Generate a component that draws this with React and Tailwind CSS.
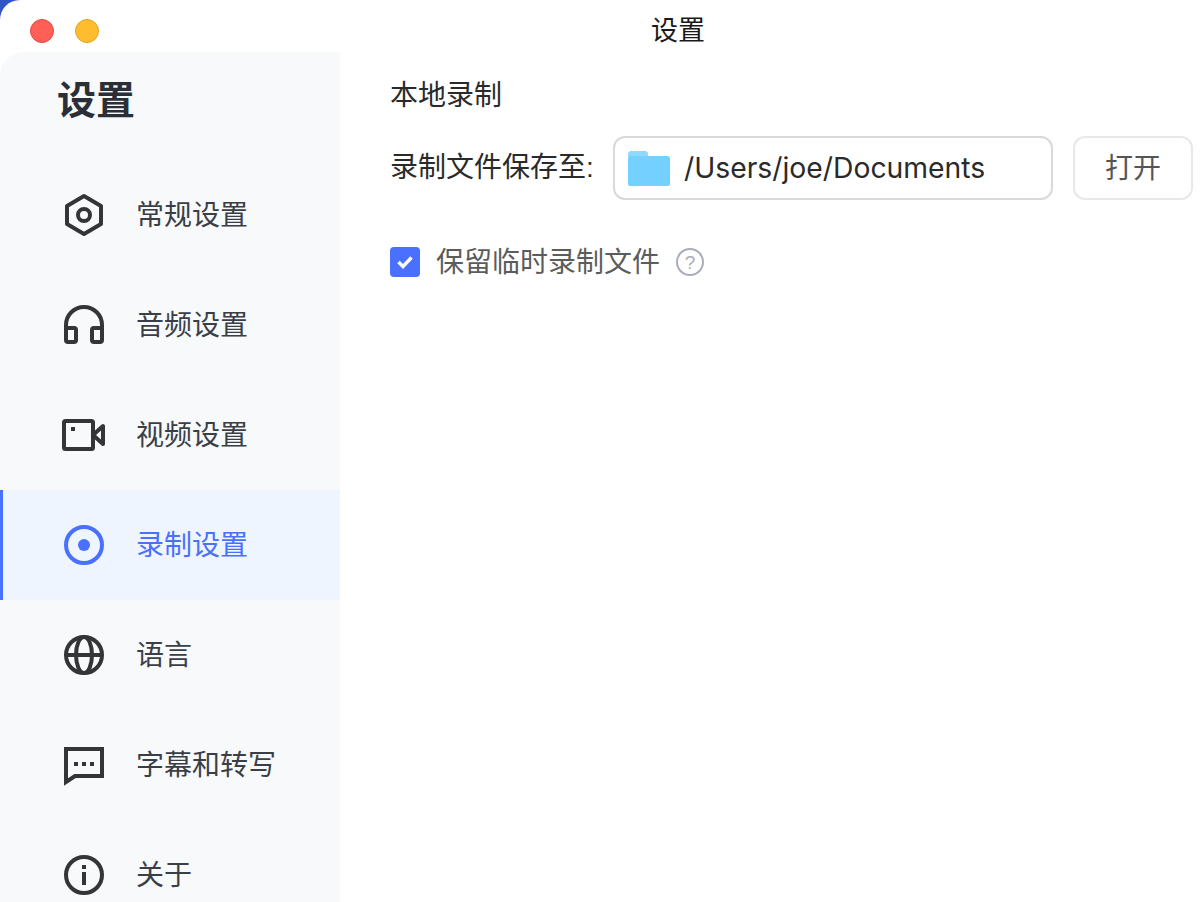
const NavIcon = ({ children, className = 'text-[#333537]' }) => (
  <svg width="44" height="44" viewBox="0 0 44 44" fill="none" stroke="currentColor" strokeWidth="4" className={`shrink-0 ${className}`}>
    {children}
  </svg>
);

const navItems = [
  {
    label: '常规设置',
    icon: (
      <>
        <path d="M22 3l17 10v18L22 41 5 31V13z" strokeLinejoin="round" />
        <circle cx="22" cy="22" r="6" />
      </>
    ),
  },
  {
    label: '音频设置',
    icon: (
      <>
        <path d="M4 27v-5a18 18 0 0 1 36 0v5" />
        <rect x="4" y="25" width="10" height="14" rx="2" />
        <rect x="30" y="25" width="10" height="14" rx="2" />
      </>
    ),
  },
  {
    label: '视频设置',
    icon: (
      <>
        <rect x="2" y="8" width="29" height="28" rx="1.5" strokeLinejoin="round" />
        <path d="M31 22l10-9v18z" strokeLinejoin="round" />
        <rect x="9" y="14" width="4" height="4" fill="currentColor" stroke="none" />
      </>
    ),
  },
  {
    label: '录制设置',
    active: true,
    icon: (
      <>
        <circle cx="22" cy="22" r="18" />
        <circle cx="22" cy="22" r="6" fill="currentColor" stroke="none" />
      </>
    ),
  },
  {
    label: '语言',
    icon: (
      <>
        <circle cx="22" cy="22" r="18" />
        <ellipse cx="22" cy="22" rx="8" ry="18" />
        <path d="M4 22h36" />
      </>
    ),
  },
  {
    label: '字幕和转写',
    icon: (
      <>
        <path d="M4 6h36v27H13l-9 6z" strokeLinejoin="miter" />
        <rect x="12" y="19" width="4" height="4" fill="currentColor" stroke="none" />
        <rect x="20" y="19" width="4" height="4" fill="currentColor" stroke="none" />
        <rect x="28" y="19" width="4" height="4" fill="currentColor" stroke="none" />
      </>
    ),
  },
  {
    label: '关于',
    icon: (
      <>
        <circle cx="22" cy="22" r="18" />
        <rect x="20" y="19" width="4" height="13" fill="currentColor" stroke="none" />
        <rect x="20" y="12" width="4" height="4" fill="currentColor" stroke="none" />
      </>
    ),
  },
];

const App = () => {
  return (
    <div className="h-[902px] overflow-hidden bg-[#2f55c9] font-['Liberation_Sans','Noto_Sans_CJK_SC',sans-serif]">
      <div className="h-full overflow-hidden rounded-tl-[20px] bg-white">
        {/* Title bar */}
        <div className="flex h-[52px] items-center pt-[8px]">
          <div className="flex w-[651px] items-center gap-[21px] pl-[30px] pt-[2px]">
            <span className="h-6 w-6 rounded-full border border-[#e5483f] bg-[#ff5f57]" />
            <span className="h-6 w-6 rounded-full border border-[#e0a528] bg-[#febc2e]" />
          </div>
          <span className="pt-[2px] text-[27px] leading-none text-[#1a1a1a]">设置</span>
        </div>

        <div className="flex">
          {/* Sidebar */}
          <div className="h-[850px] w-[340px] shrink-0 overflow-hidden rounded-tl-[24px] bg-[#f7f9fb]">
            <h1 className="flex h-[108px] items-center pb-[12px] pl-[57px] text-[39px] font-bold leading-none text-[#2b3038]">设置</h1>
            {navItems.map((item) => (
              <div
                key={item.label}
                className={`flex h-[110px] shrink-0 items-center gap-[30px] ${
                  item.active ? 'border-l-[3px] border-[#4a70ff] bg-[#eef5ff] pl-[59px]' : 'pl-[62px]'
                }`}
              >
                <NavIcon className={item.active ? 'text-[#4a70ff]' : 'text-[#333537]'}>{item.icon}</NavIcon>
                <span className={`pt-[2px] text-[28px] leading-none ${item.active ? 'text-[#4a70ff]' : 'text-[#3a3f47]'}`}>{item.label}</span>
              </div>
            ))}
          </div>

          {/* Main */}
          <div className="min-w-0 flex-1 pl-[50px] pt-[29px]">
            <h2 className="pt-[1px] text-[28px] font-normal leading-[27px] text-[#2a2a2a]">本地录制</h2>
            <div className="mt-[27px] flex items-center">
              <span className="w-[223px] text-[28px] leading-none text-[#2a2a2a]">录制文件保存至:</span>
              <div className="flex h-16 w-[440px] items-center rounded-[12px] border-2 border-[#d9d9d9] pl-[13px]">
                <svg width="42" height="36" viewBox="0 0 42 36" className="mt-[1px] shrink-0">
                  <path d="M0 3a3 3 0 0 1 3-3h14a3 3 0 0 1 3 3v3h-20z" fill="#8fd9ff" />
                  <path d="M0 8a3 3 0 0 1 3-3h36a3 3 0 0 1 3 3v25a2 2 0 0 1-2 2H2a2 2 0 0 1-2-2z" fill="#74d0ff" />
                </svg>
                <span className="ml-[14px] pt-[1px] font-['Inter',sans-serif] text-[28.3px] leading-none text-[#2a2a2a]">/Users/joe/Documents</span>
              </div>
              <button className="ml-5 h-16 w-[120px] rounded-[12px] border-2 border-[#e8e8e8] pt-[1px] text-[28px] leading-none text-[#555555]">打开</button>
            </div>
            <div className="mt-[47px] flex items-center">
              <span className="flex h-[30px] w-[30px] items-center justify-center rounded-[4px] bg-[#4a70ff]">
                <svg width="16" height="14" viewBox="0 0 16 14" fill="none" stroke="white" strokeWidth="3.4">
                  <path d="M1.5 7l4.5 4.5L14.5 2.5" />
                </svg>
              </span>
              <span className="ml-[16px] pt-[2px] text-[28px] leading-none text-[#5c5c5c]">保留临时录制文件</span>
              <span className="ml-[16px] flex h-[28px] w-[28px] items-center justify-center rounded-full border-2 border-[#a9adb8] text-[19px] leading-none text-[#a9adb8]">?</span>
            </div>
          </div>
        </div>
      </div>
    </div>
  );
};

export default App;
